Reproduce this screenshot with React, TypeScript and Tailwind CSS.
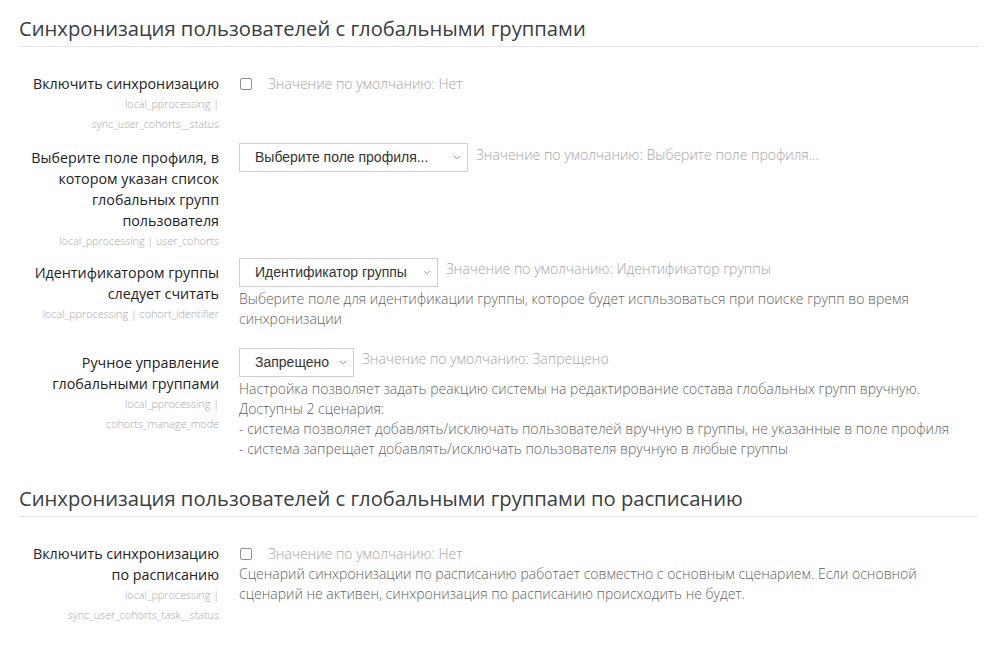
import React from "react";

const font = { fontFamily: '"Open Sans", "Noto Sans", sans-serif' };

function Chevron() {
  return (
    <svg width="8" height="5" viewBox="0 0 8 5" className="shrink-0">
      <path d="M1 0.9 L4 3.9 L7 0.9" fill="none" stroke="#a0a0a0" strokeWidth="1" />
    </svg>
  );
}

function Select({ text, width }: { text: string; width: string }) {
  return (
    <div
      className={`${width} h-[29px] shrink-0 border border-[#cfcfcf] bg-white flex items-center justify-between pl-[15px] pr-[6px] text-[14px] text-[#333]`}
      style={{ fontFamily: '"Liberation Sans", Arial, sans-serif' }}
    >
      <span className="whitespace-nowrap">{text}</span>
      <Chevron />
    </div>
  );
}

function Checkbox() {
  return <div className="w-[12px] h-[12px] border border-[#8f8f8f] rounded-[2px] bg-white shrink-0" />;
}

function Label({ title, small, pt }: { title: string; small: string[]; pt: string }) {
  return (
    <div className={`w-[200px] shrink-0 text-right ${pt}`}>
      <div className="text-[14.3px] leading-[21px] text-[#1d2125]">{title}</div>
      <div className="text-[10.8px] leading-[20px] text-[#a8a8a8] font-light">
        {small.map((s, i) => (
          <div key={i}>{s}</div>
        ))}
      </div>
    </div>
  );
}

function Heading({ children, mt }: { children: React.ReactNode; mt: string }) {
  return (
    <div className={`${mt} border-b border-[#e3e3e3] pb-[6px]`}>
      <h3 className="text-[20.2px] leading-[24px] text-[#3a3d40] font-normal">{children}</h3>
    </div>
  );
}

export default function App() {
  return (
    <div className="bg-white w-[990px] h-[650px] overflow-hidden pl-[19px] pr-[12px] pt-[16px]" style={font}>
      <Heading mt="mt-0">Синхронизация пользователей с глобальными группами</Heading>

      {/* Row 1 */}
      <div className="flex mt-[26px]">
        <Label title="Включить синхронизацию" small={["local_pprocessing |", "sync_user_cohorts__status"]} pt="pt-0" />
        <div className="ml-[20px] w-[725px]">
          <div className="h-[21px] flex items-center pl-[1px]">
            <Checkbox />
            <span className="ml-[16px] text-[14px] font-light text-[#a5a5a5] leading-[21px]">Значение по умолчанию: Нет</span>
          </div>
        </div>
      </div>

      {/* Row 2 */}
      <div className="flex mt-[9px]">
        <Label
          title="Выберите поле профиля, в котором указан список глобальных групп пользователя"
          small={["local_pprocessing | user_cohorts"]}
          pt="pt-[4px]"
        />
        <div className="ml-[20px] w-[725px]">
          <div className="flex items-start">
            <Select text="Выберите поле профиля..." width="w-[229px]" />
            <span className="ml-[8px] mt-[1px] text-[14px] font-light leading-[21px] text-[#a5a5a5] whitespace-nowrap">
              Значение по умолчанию: Выберите поле профиля...
            </span>
          </div>
        </div>
      </div>

      {/* Row 3 */}
      <div className="flex mt-[7px]">
        <Label title="Идентификатором группы следует считать" small={["local_pprocessing | cohort_identifier"]} pt="pt-[4px]" />
        <div className="ml-[20px] w-[725px]">
          <div className="flex items-start">
            <Select text="Идентификатор группы" width="w-[199px]" />
            <span className="ml-[8px] text-[14px] font-light leading-[21px] text-[#a5a5a5] whitespace-nowrap">
              Значение по умолчанию: Идентификатор группы
            </span>
          </div>
          <div className="mt-[2px] text-[14px] font-light leading-[20px] text-[#5f5f5f]">
            Выберите поле для идентификации группы, которое будет испльзоваться при поиске групп во время синхронизации
          </div>
        </div>
      </div>

      {/* Row 4 */}
      <div className="flex mt-[19px]">
        <Label title="Ручное управление глобальными группами" small={["local_pprocessing |", "cohorts_manage_mode"]} pt="pt-[4px]" />
        <div className="ml-[20px] w-[725px]">
          <div className="flex items-start">
            <Select text="Запрещено" width="w-[115px]" />
            <span className="ml-[8px] text-[14px] font-light leading-[21px] text-[#a5a5a5] whitespace-nowrap">
              Значение по умолчанию: Запрещено
            </span>
          </div>
          <div className="mt-[2px] text-[14px] font-light leading-[20px] text-[#5f5f5f]">
            <div>Настройка позволяет задать реакцию системы на редактирование состава глобальных групп вручную.</div>
            <div>Доступны 2 сценария:</div>
            <div>- система позволяет добавлять/исключать пользователей вручную в группы, не указанные в поле профиля</div>
            <div>- система запрещает добавлять/исключать пользователя вручную в любые группы</div>
          </div>
        </div>
      </div>

      <Heading mt="mt-[27px]">Синхронизация пользователей с глобальными группами по расписанию</Heading>

      {/* Row 5 */}
      <div className="flex mt-[26px]">
        <Label
          title="Включить синхронизацию по расписанию"
          small={["local_pprocessing |", "sync_user_cohorts_task__status"]}
          pt="pt-0"
        />
        <div className="ml-[20px] w-[725px]">
          <div className="h-[21px] flex items-center pl-[1px]">
            <Checkbox />
            <span className="ml-[16px] text-[14px] font-light text-[#a5a5a5] leading-[21px]">Значение по умолчанию: Нет</span>
          </div>
          <div className="text-[14px] font-light leading-[20px] text-[#5f5f5f]">
            Сценарий синхронизации по расписанию работает совместно с основным сценарием. Если основной сценарий не активен, синхронизация по расписанию происходить не будет.
          </div>
        </div>
      </div>
    </div>
  );
}
